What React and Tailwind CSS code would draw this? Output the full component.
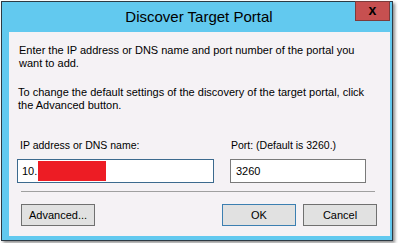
import React from 'react';

const font = { fontFamily: '"Liberation Sans", Arial, sans-serif' };

function Btn({ children, primary }) {
  return (
    <button
      type="button"
      className={
        'h-[22px] w-[74px] bg-[#e1e1e1] text-[11px] text-black leading-none border ' +
        (primary ? 'border-[#3c7fb1]' : 'border-[#707070]')
      }
    >
      {children}
    </button>
  );
}

export default function App() {
  return (
    <div className="w-[398px] h-[243px] bg-white overflow-hidden" style={font}>
      <div className="relative ml-px mt-px w-[392px] h-[240px] border border-[#2d3a44] bg-[#62c9ef] flex flex-col shadow-[2px_2px_3px_rgba(0,0,0,0.45)]">
        <div className="h-[30px] shrink-0 flex items-center justify-center pl-[4px] text-[15px] text-black">
          Discover Target Portal
        </div>
        <div className="absolute top-[-1px] right-[2px] w-[35px] h-[20px] bg-[#c75050] border border-[#7d3b3b] flex items-center justify-center">
          <span className="text-[14px] font-bold text-black leading-none -mt-[2px]">x</span>
        </div>
        <div className="ml-[7px] mr-[2px] mb-[4px] flex-1 bg-[#f5f2f5] flex flex-col text-[11px] leading-[13px] text-black">
          <p className="mt-[12px] ml-[10px]">
            Enter the IP address or DNS name and port number of the portal you
            <br />
            want to add.
          </p>
          <p className="mt-[16px] ml-[9px]">
            To change the default settings of the discovery of the target portal, click
            <br />
            the Advanced button.
          </p>
          <div className="mt-[27px] ml-[8px] flex gap-[16px] text-[10.5px]">
            <div className="flex flex-col">
              <span className="ml-[3px] mb-[7px]">IP address or DNS name:</span>
              <div className="w-[197px] h-[24px] border border-[#3c6a8e] bg-white flex items-center pl-[4px] text-[11px]">
                <span>10.</span>
                <span className="ml-[1px] w-[68px] h-[20px] bg-[#ed1c24]" />
              </div>
            </div>
            <div className="flex flex-col">
              <span className="ml-[1px] mb-[7px]">Port: (Default is 3260.)</span>
              <div className="w-[136px] h-[24px] border border-[#7a7a7a] bg-white flex items-center pl-[5px] text-[11px]">
                3260
              </div>
            </div>
          </div>
          <div className="mt-[8px] ml-[12px] w-[354px] h-px bg-[#a0a0a0]" />
          <div className="mt-[12px] ml-[12px] flex">
            <Btn>Advanced...</Btn>
            <div className="ml-[127px] flex gap-[7px]">
              <Btn primary>OK</Btn>
              <Btn>Cancel</Btn>
            </div>
          </div>
        </div>
      </div>
    </div>
  );
}
